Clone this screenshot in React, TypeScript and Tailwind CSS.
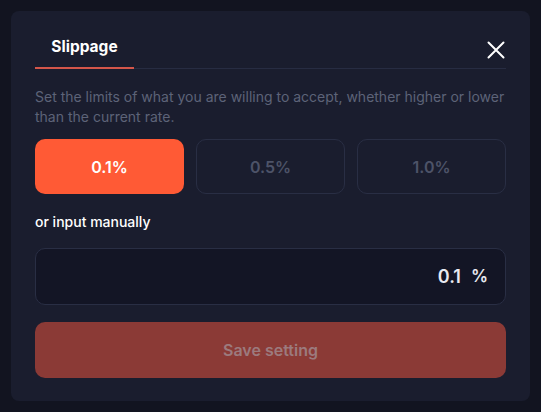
import React from "react";

export default function App() {
  const options = ["0.1%", "0.5%", "1.0%"];
  return (
    <div
      className="w-[541px] h-[412px] bg-[#121420] p-[11px] pb-[11px]"
      style={{ fontFamily: "Inter, 'Noto Sans', sans-serif" }}
    >
      <div className="w-[519px] h-[390px] rounded-[8px] bg-[#1a1d2e] px-[24px] pt-[15px] flex flex-col">
        <div className="flex items-end justify-between border-b border-[#272c42] h-[43px]">
          <div className="w-[99px] flex justify-center border-b-2 border-[#d4564a] -mb-px pb-[10px]">
            <span className="text-[15.5px] leading-[20px] font-bold text-white">Slippage</span>
          </div>
          <button className="mb-[8px] text-white w-[20px] h-[20px] flex items-center justify-center">
            <svg width="18" height="18" viewBox="0 0 18 18" fill="none">
              <path d="M1.5 1.5L16.5 16.5M16.5 1.5L1.5 16.5" stroke="white" strokeWidth="2" strokeLinecap="round" />
            </svg>
          </button>
        </div>
        <p className="mt-[18px] text-[14px] leading-[20px] text-[#5d6378]">
          Set the limits of what you are willing to accept, whether higher or lower than the current rate.
        </p>
        <div className="mt-[12px] grid grid-cols-3 gap-[12px]">
          {options.map((o, i) =>
            i === 0 ? (
              <button
                key={o}
                className="h-[55px] rounded-[10px] bg-[#ff5a35] text-white text-[16px] font-semibold"
              >
                {o}
              </button>
            ) : (
              <button
                key={o}
                className="h-[55px] rounded-[10px] border border-[#292e44] text-[#4d5368] text-[16px] font-semibold"
              >
                {o}
              </button>
            )
          )}
        </div>
        <div className="mt-[18px] text-[14px] leading-[20px] font-medium text-white">or input manually</div>
        <div className="mt-[16px] h-[57px] rounded-[10px] border border-[#292e44] bg-[#131525] flex items-center justify-end pr-[17px]">
          <span className="text-[18px] font-semibold text-[#e8e9f0]">0.1</span>
          <span className="ml-[10px] text-[17px] font-semibold text-[#e8e9f0]">%</span>
        </div>
        <button className="mt-[17px] h-[56px] rounded-[10px] bg-[#8b3a36] text-[#9c7a7e] text-[16px] font-semibold">
          Save setting
        </button>
      </div>
    </div>
  );
}
